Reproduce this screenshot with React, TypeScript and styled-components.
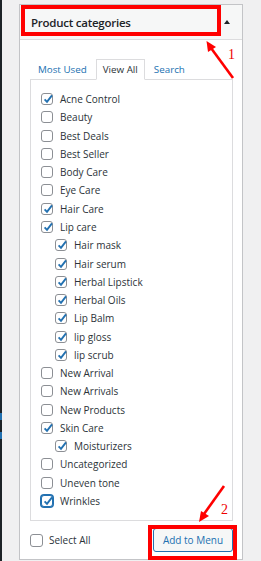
import React from "react";
import styled, { createGlobalStyle } from "styled-components";

const Global = createGlobalStyle`
  html, body { margin: 0; padding: 0; background: #f0f0f1; }
  body { font-family: "Open Sans", "Noto Sans", sans-serif; color: #2c3338; }
  * { box-sizing: border-box; }
`;

const Page = styled.div`
  position: relative;
  display: flex;
  width: 261px;
  height: 561px;
  overflow: hidden;
  background: #f0f0f1;
`;

const AdminEdge = styled.div`
  flex: none;
  width: 2px;
  background: #1d2327;
  display: flex;
  flex-direction: column;
  gap: 12px;
  padding-top: 413px;
`;

const EdgeMark = styled.span`
  display: block;
  width: 2px;
  height: 7px;
  background: #2271b1;
`;

const Panel = styled.section`
  flex: none;
  margin: 4px 0 0 17px;
  width: 224px;
  height: 556px;
  background: #fff;
  border: 1px solid #c3c4c7;
  display: flex;
  flex-direction: column;
`;

const Header = styled.div`
  height: 35px;
  flex: none;
  display: flex;
  align-items: center;
  justify-content: space-between;
  padding: 0 12px 0 11px;
  background: #f6f7f7;
  border-bottom: 1px solid #dcdcde;
`;

const Title = styled.h2`
  margin: 0;
  font-size: 11.5px;
  font-weight: 600;
  letter-spacing: -0.25px;
  color: #1d2327;
`;

const Toggle = styled.span`
  width: 0;
  height: 0;
  border-left: 3px solid transparent;
  border-right: 3px solid transparent;
  border-bottom: 4px solid #1d2327;
`;

const Tabs = styled.ul`
  list-style: none;
  margin: 19px 0 0 11px;
  padding: 0;
  display: flex;
  gap: 2px;
  position: relative;
  z-index: 1;
`;

const Tab = styled.li<{ $active?: boolean }>`
  height: 21px;
  display: flex;
  align-items: center;
  padding: 0 6px;
  font-size: 9.8px;
  margin-bottom: -1px;
  color: ${(p) => (p.$active ? "#2c3338" : "#2271b1")};
  background: ${(p) => (p.$active ? "#fff" : "transparent")};
  border: 1px solid ${(p) => (p.$active ? "#dcdcde" : "transparent")};
  border-bottom-color: ${(p) => (p.$active ? "#fff" : "transparent")};
`;

const TabPanel = styled.ul`
  list-style: none;
  margin: 0 0 0 10px;
  width: 203px;
  padding: 10px 0 10px 10px;
  border: 1px solid #dcdcde;
  background: #fff;
`;

const Row = styled.li<{ $depth: number }>`
  height: 18.27px;
  display: flex;
  align-items: center;
  gap: 7px;
  padding-left: ${(p) => p.$depth * 14}px;
  font-size: 10px;
  white-space: nowrap;
`;

const Box = styled.span<{ $focus?: boolean; $size?: number }>`
  flex: none;
  position: relative;
  width: ${(p) => p.$size ?? 12}px;
  height: ${(p) => p.$size ?? 12}px;
  border: 1px solid ${(p) => (p.$focus ? "#2271b1" : "#8c8f94")};
  border-radius: 3px;
  background: #fff;
  box-shadow: ${(p) => (p.$focus ? "0 0 0 1px #2271b1" : "none")};
  svg { position: absolute; left: -1px; top: -2px; }
`;

const Footer = styled.div`
  display: flex;
  align-items: center;
  justify-content: space-between;
  margin: 7px 9px 0 10px;
`;

const SelectAll = styled.label`
  display: flex;
  align-items: center;
  gap: 6px;
  font-size: 10px;
`;

const Button = styled.button`
  height: 24px;
  width: 80px;
  padding: 0;
  font-family: inherit;
  font-size: 10px;
  color: #2271b1;
  background: #f6f7f7;
  border: 1px solid #2271b1;
  border-radius: 3px;
`;

const Overlay = styled.svg`
  position: absolute;
  left: 0;
  top: 0;
  pointer-events: none;
`;

type Cat = { name: string; checked: boolean; depth: number; focus?: boolean };

const cats: Cat[] = [
  { name: "Acne Control", checked: true, depth: 0 },
  { name: "Beauty", checked: false, depth: 0 },
  { name: "Best Deals", checked: false, depth: 0 },
  { name: "Best Seller", checked: false, depth: 0 },
  { name: "Body Care", checked: false, depth: 0 },
  { name: "Eye Care", checked: false, depth: 0 },
  { name: "Hair Care", checked: true, depth: 0 },
  { name: "Lip care", checked: true, depth: 0 },
  { name: "Hair mask", checked: true, depth: 1 },
  { name: "Hair serum", checked: true, depth: 1 },
  { name: "Herbal Lipstick", checked: true, depth: 1 },
  { name: "Herbal Oils", checked: true, depth: 1 },
  { name: "Lip Balm", checked: true, depth: 1 },
  { name: "lip gloss", checked: true, depth: 1 },
  { name: "lip scrub", checked: true, depth: 1 },
  { name: "New Arrival", checked: false, depth: 0 },
  { name: "New Arrivals", checked: false, depth: 0 },
  { name: "New Products", checked: false, depth: 0 },
  { name: "Skin Care", checked: true, depth: 0 },
  { name: "Moisturizers", checked: true, depth: 1 },
  { name: "Uncategorized", checked: false, depth: 0 },
  { name: "Uneven tone", checked: false, depth: 0 },
  { name: "Wrinkles", checked: true, depth: 0, focus: true },
];

const Check = () => (
  <svg width="14" height="14" viewBox="0 0 14 14">
    <path d="M3.6 7.4 L6 9.9 L11 3.4" fill="none" stroke="#2271b1" strokeWidth="1.9" strokeLinecap="butt" strokeLinejoin="miter" />
  </svg>
);

export default function App() {
  return (
    <>
      <Global />
      <Page>
        <AdminEdge>
          <EdgeMark />
          <EdgeMark />
        </AdminEdge>
        <Panel>
          <Header>
            <Title>Product categories</Title>
            <Toggle />
          </Header>
          <Tabs>
            <Tab>Most Used</Tab>
            <Tab $active>View All</Tab>
            <Tab>Search</Tab>
          </Tabs>
          <TabPanel>
            {cats.map((c) => (
              <Row key={c.name} $depth={c.depth}>
                <Box $focus={c.focus}>{c.checked && <Check />}</Box>
                {c.name}
              </Row>
            ))}
          </TabPanel>
          <Footer>
            <SelectAll>
              <Box $size={13} />
              Select All
            </SelectAll>
            <Button>Add to Menu</Button>
          </Footer>
        </Panel>
        <Overlay width="261" height="561" viewBox="0 0 261 561">
          <rect x="23" y="7" width="196" height="27" fill="none" stroke="#f00" strokeWidth="4" />
          <rect x="150" y="527" width="85" height="31" fill="none" stroke="#f00" strokeWidth="4" />
          <line x1="233" y1="78" x2="211" y2="48" stroke="#f00" strokeWidth="2.6" />
          <polygon points="206.5,41 216,47 208,52" fill="#f00" />
          <line x1="224" y1="486" x2="204" y2="514" stroke="#f00" strokeWidth="2.6" />
          <polygon points="199,522 201,511 209,516" fill="#f00" />
          <text x="228" y="59" fontFamily="Liberation Serif, serif" fontSize="14" fill="#e00">1</text>
          <text x="221" y="514" fontFamily="Liberation Serif, serif" fontSize="14" fill="#e00">2</text>
        </Overlay>
      </Page>
    </>
  );
}
